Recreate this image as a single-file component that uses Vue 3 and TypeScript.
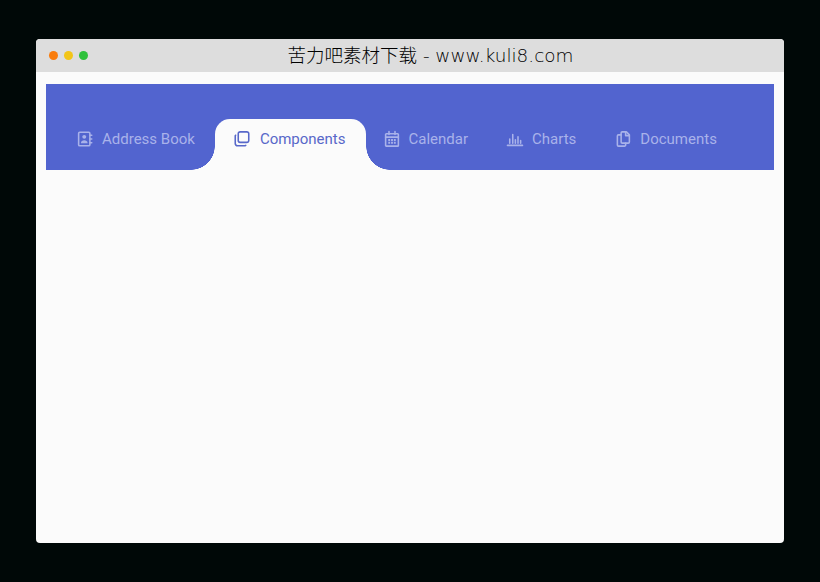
<script setup lang="ts">
interface Tab {
  key: string
  label: string
  active?: boolean
  paths: string[]
  fills?: string[]
}

const tabs: Tab[] = [
  {
    key: 'address',
    label: 'Address Book',
    paths: ['M5 3h12a1.500 1.500 0 0 1 1.500 1.500v15A1.500 1.500 0 0 1 17 21H5a1.500 1.500 0 0 1-1.500-1.500v-15A1.500 1.500 0 0 1 5 3z', 'M18.500 7H21M18.500 12H21M18.500 17H21'],
    fills: ['M11 6.500a2.600 2.600 0 1 1 0 5.200 2.600 2.600 0 0 1 0-5.200z', 'M6.500 17.500c0-5 9-5 9 0z'],
  },
  {
    key: 'components',
    label: 'Components',
    active: true,
    paths: ['M9.500 2.500h9A2.500 2.500 0 0 1 21 5v9a2.500 2.500 0 0 1-2.500 2.500h-9A2.500 2.500 0 0 1 7 14V5a2.500 2.500 0 0 1 2.500-2.500z', 'M17 20.500a1 1 0 0 1-1 .500H6a3 3 0 0 1-3-3V8a1 1 0 0 1 .500-1'],
  },
  {
    key: 'calendar',
    label: 'Calendar',
    paths: ['M4.500 5h15a1 1 0 0 1 1 1v14.500a1 1 0 0 1-1 1h-15a1 1 0 0 1-1-1V6a1 1 0 0 1 1-1z', 'M8 2v4M16 2v4M3.500 9.500h17'],
    fills: ['M7 12h2.500v2.500H7zM10.750 12h2.500v2.500h-2.500zM14.500 12H17v2.500h-2.500zM7 15.700h2.500v2.500H7zM10.750 15.700h2.500v2.500h-2.500zM14.500 15.700H17v2.500h-2.500z'],
  },
  {
    key: 'charts',
    label: 'Charts',
    paths: ['M2 20.500h20', 'M5 12v5.500M9 6v11.500M12.500 13v4.500M16 9v8.500M19.500 14v3.500'],
  },
  {
    key: 'documents',
    label: 'Documents',
    paths: ['M11 2.500h5.500l4 4V16a1.500 1.500 0 0 1-1.500 1.500h-8A1.500 1.500 0 0 1 9.500 16V4A1.500 1.500 0 0 1 11 2.500z', 'M15.500 3v4.500h4.500', 'M9.500 6.500H6A1.500 1.500 0 0 0 4.500 8v12A1.500 1.500 0 0 0 6 21.500h8A1.500 1.500 0 0 0 15.500 20v-2.500'],
  },
]
</script>

<template>
  <div class="stage">
    <div class="window">
      <header class="titlebar">
        <div class="dots">
          <span class="dot orange"></span>
          <span class="dot yellow"></span>
          <span class="dot green"></span>
        </div>
        <div class="title"><span class="cjk">苦力吧素材下载</span><span class="latin"> - www.kuli8.com</span></div>
      </header>
      <main class="body">
        <nav class="tabs">
          <a v-for="t in tabs" :key="t.key" class="tab" :class="{ active: t.active }">
            <svg class="icon" viewBox="0 0 24 24" fill="none" stroke="currentColor" stroke-width="2.100" stroke-linecap="round" stroke-linejoin="round">
              <path v-for="(d, i) in t.paths" :key="i" :d="d" />
              <path v-for="(d, i) in t.fills ?? []" :key="'f' + i" :d="d" fill="currentColor" stroke="none" />
            </svg>
            <span>{{ t.label }}</span>
          </a>
        </nav>
      </main>
    </div>
  </div>
</template>

<style>
html, body { margin: 0; background: #000807; }
</style>

<style scoped>
.stage {
  width: 820px;
  height: 582px;
  box-sizing: border-box;
  padding: 39px 36px;
  background: #000807;
  font-family: Roboto, "Noto Sans CJK SC", sans-serif;
}
.window {
  height: 504px;
  display: flex;
  flex-direction: column;
  border-radius: 4px;
  overflow: hidden;
  background: #fbfbfb;
}
.titlebar {
  height: 33px;
  flex: none;
  display: flex;
  align-items: center;
  background: #dddddd;
}
.dots {
  display: flex;
  gap: 6px;
  padding-left: 13px;
}
.dot {
  width: 9px;
  height: 9px;
  border-radius: 50%;
}
.orange { background: #f97c0c; }
.yellow { background: #f2c518; }
.green { background: #2fc13b; }
.title {
  flex: 1;
  padding-right: 11px;
  text-align: center;
  line-height: 33px;
  color: #000;
  white-space: pre;
}
.cjk {
  font-family: "Noto Sans CJK SC", sans-serif;
  font-weight: 300;
  font-size: 18.500px;
}
.latin {
  font-family: "DejaVu Sans", sans-serif;
  font-weight: 200;
  font-size: 18.400px;
}
.body {
  flex: 1;
  padding: 12px 10px;
}
.tabs {
  height: 86px;
  box-sizing: border-box;
  display: flex;
  align-items: flex-end;
  padding-left: 12px;
  background: #5264cf;
}
.tab {
  position: relative;
  height: 51px;
  box-sizing: border-box;
  display: flex;
  align-items: center;
  gap: 8px;
  padding: 0 20px 11px 18px;
  font-size: 15px;
  color: #a9b2ea;
  white-space: nowrap;
}
.icon {
  width: 18px;
  height: 18px;
  flex: none;
}
.tab.active {
  gap: 9px;
  margin-right: -1px;
  padding-right: 20px;
  color: #5868c9;
  background: #fbfbfb;
  border-radius: 15px 15px 0 0;
}
.tab.active::before,
.tab.active::after {
  content: "";
  position: absolute;
  bottom: 0;
  width: 24px;
  height: 24px;
  background: radial-gradient(circle at var(--cx) 0, #5264cf 23.500px, #fbfbfb 24px);
}
.tab.active::before {
  --cx: 0;
  left: -24px;
}
.tab.active::after {
  --cx: 100%;
  right: -24px;
}
</style>
